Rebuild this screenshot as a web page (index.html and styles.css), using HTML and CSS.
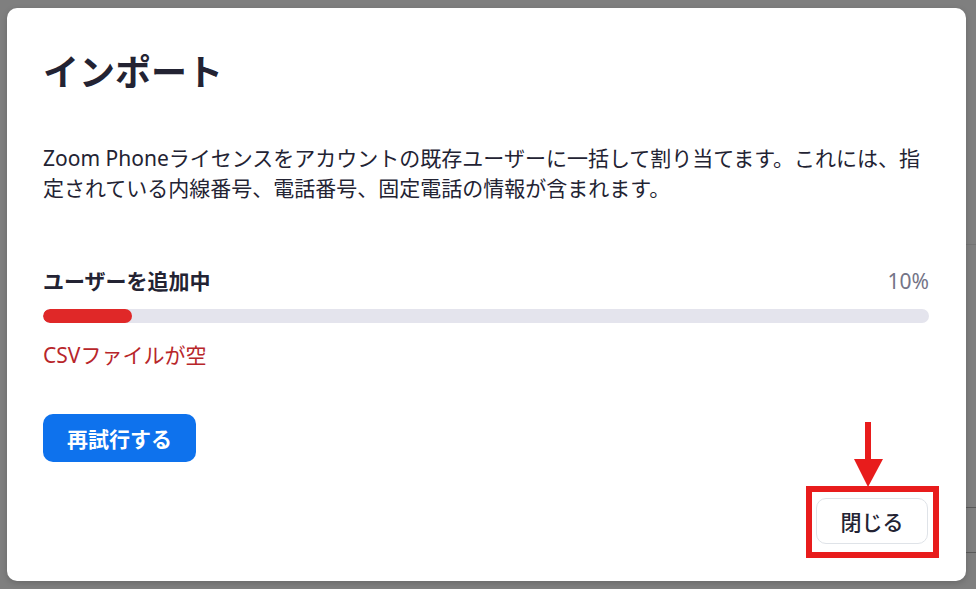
FILE: index.html
```html
<!DOCTYPE html>
<html lang="ja">
<head>
<meta charset="utf-8">
<title>インポート</title>
<link rel="stylesheet" href="styles.css">
</head>
<body>
<div class="backdrop">
  <div class="modal">
    <h1 class="title">インポート</h1>
    <p class="desc">Zoom Phoneライセンスをアカウントの既存ユーザーに一括して割り当てます。これには、指定されている内線番号、電話番号、固定電話の情報が含まれます。</p>
    <div class="progress-head">
      <span class="progress-label">ユーザーを追加中</span>
      <span class="progress-pct">10%</span>
    </div>
    <div class="track"><div class="fill" style="width:10%"></div></div>
    <p class="error">CSVファイルが空</p>
    <div class="retry-row">
      <button class="btn-primary">再試行する</button>
    </div>
    <div class="footer">
      <div class="close-wrap">
        <button class="btn-secondary">閉じる</button>
        <span class="highlight"></span>
        <svg class="arrow" viewBox="0 0 34 68" width="34" height="68" aria-hidden="true">
          <rect x="13" y="2" width="6" height="39" fill="#e81c1c"/>
          <polygon points="2,39 31,39 16,67" fill="#e81c1c"/>
        </svg>
      </div>
    </div>
  </div>
</div>
</body>
</html>
```

FILE: styles.css
```css
html, body {
  margin: 0;
  padding: 0;
}
body {
  width: 976px;
  height: 589px;
  overflow: hidden;
  font-family: "Noto Sans", "Noto Sans CJK JP", sans-serif;
  color: #232333;
  background:
    linear-gradient(#747474, #747474) right 0 top 244px / 12px 1px no-repeat,
    linear-gradient(#5a5a5a, #5a5a5a) right 0 top 507px / 12px 1px no-repeat,
    linear-gradient(#5a5a5a, #5a5a5a) right 0 top 552px / 12px 1px no-repeat,
    #7f7f7f;
}
.backdrop {
  padding: 8px 0 0 7px;
}
.modal {
  width: 959px;
  height: 573px;
  box-sizing: border-box;
  background: #ffffff;
  border-radius: 10px;
  box-shadow: 0 2px 6px rgba(0, 0, 0, 0.18);
  padding: 43px 37px 0 36px;
  display: flex;
  flex-direction: column;
}
.title {
  margin: 0;
  font-size: 36px;
  line-height: 44px;
  font-weight: 700;
  color: #232333;
}
.desc {
  margin: 48px 0 0;
  font-size: 21px;
  line-height: 30px;
  color: #232333;
}
.progress-head {
  margin-top: 63px;
  display: flex;
  justify-content: space-between;
  align-items: center;
  line-height: 30px;
}
.progress-label {
  font-size: 21px;
  font-weight: 700;
}
.progress-pct {
  font-size: 21px;
  color: #747487;
}
.track {
  margin-top: 13px;
  height: 14px;
  border-radius: 7px;
  background: #e4e4ed;
  overflow: hidden;
}
.fill {
  height: 100%;
  border-radius: 7px;
  background: #e02828;
}
.error {
  margin: 17px 0 0;
  font-size: 21px;
  line-height: 30px;
  color: #b8262a;
}
.retry-row {
  margin-top: 44px;
  display: flex;
}
.btn-primary {
  height: 48px;
  padding: 0 24px;
  border: none;
  border-radius: 10px;
  background: #0e72ed;
  color: #ffffff;
  font-family: "Noto Sans", "Noto Sans CJK JP", sans-serif;
  font-size: 21px;
  font-weight: 700;
}
.footer {
  margin-top: 36px;
  display: flex;
  justify-content: flex-end;
  padding-right: 1px;
}
.close-wrap {
  position: relative;
  display: flex;
}
.btn-secondary {
  height: 46px;
  width: 112px;
  padding: 0;
  border: 1px solid #dfe3e8;
  border-radius: 10px;
  background: #ffffff;
  color: #232333;
  font-family: "Noto Sans", "Noto Sans CJK JP", sans-serif;
  font-size: 21px;
  font-weight: 500;
}
.highlight {
  position: absolute;
  left: -10px;
  right: -11px;
  top: -12px;
  bottom: -14px;
  border: 6px solid #e81c1c;
  pointer-events: none;
}
.arrow {
  position: absolute;
  left: 36px;
  top: -78px;
}
```
